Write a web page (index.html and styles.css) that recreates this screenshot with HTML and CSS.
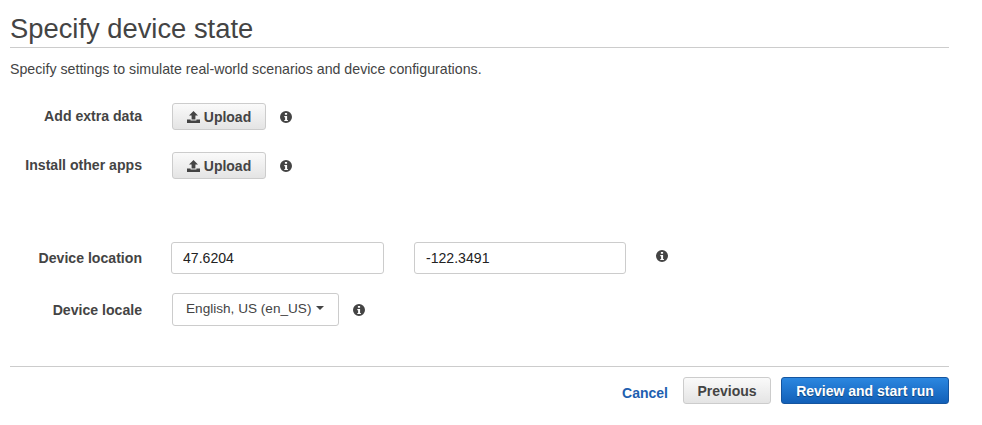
FILE: index.html
```html
<!DOCTYPE html>
<html lang="en">
<head>
  <meta charset="UTF-8">
  <title>Specify device state</title>
  <link rel="stylesheet" href="styles.css">
</head>
<body>
  <h1>Specify device state</h1>
  <p class="intro">Specify settings to simulate real-world scenarios and device configurations.</p>

  <div class="row row-upload">
    <label>Add extra data</label>
    <button class="btn upload">
      <svg class="upload-icon" viewBox="0 0 13 12" width="13" height="12"><path d="M6.5 0 L11 4.6 H8.4 V8.4 H4.6 V4.6 H2 Z M0 8.6 H3.6 V9.6 H9.4 V8.6 H13 V12 H0 Z"/></svg>
      Upload
    </button>
    <svg class="info" viewBox="0 0 12 12" width="12" height="12"><path fill-rule="evenodd" d="M6 0a6 6 0 1 0 0 12A6 6 0 0 0 6 0z M4.9 1.9h2.2v1.9H4.9z M4.3 5h2.8v3.9h.8v1.2H4.3V8.9h.8V6.2h-.8z"/></svg>
  </div>

  <div class="row row-upload">
    <label>Install other apps</label>
    <button class="btn upload">
      <svg class="upload-icon" viewBox="0 0 13 12" width="13" height="12"><path d="M6.5 0 L11 4.6 H8.4 V8.4 H4.6 V4.6 H2 Z M0 8.6 H3.6 V9.6 H9.4 V8.6 H13 V12 H0 Z"/></svg>
      Upload
    </button>
    <svg class="info" viewBox="0 0 12 12" width="12" height="12"><path fill-rule="evenodd" d="M6 0a6 6 0 1 0 0 12A6 6 0 0 0 6 0z M4.9 1.9h2.2v1.9H4.9z M4.3 5h2.8v3.9h.8v1.2H4.3V8.9h.8V6.2h-.8z"/></svg>
  </div>

  <div class="row row-location">
    <label>Device location</label>
    <input class="field" value="47.6204">
    <input class="field field-second" value="-122.3491">
    <svg class="info info-location" viewBox="0 0 12 12" width="12" height="12"><path fill-rule="evenodd" d="M6 0a6 6 0 1 0 0 12A6 6 0 0 0 6 0z M4.9 1.9h2.2v1.9H4.9z M4.3 5h2.8v3.9h.8v1.2H4.3V8.9h.8V6.2h-.8z"/></svg>
  </div>

  <div class="row row-locale">
    <label>Device locale</label>
    <div class="select">English, US (en_US)<span class="caret"></span></div>
    <svg class="info" viewBox="0 0 12 12" width="12" height="12"><path fill-rule="evenodd" d="M6 0a6 6 0 1 0 0 12A6 6 0 0 0 6 0z M4.9 1.9h2.2v1.9H4.9z M4.3 5h2.8v3.9h.8v1.2H4.3V8.9h.8V6.2h-.8z"/></svg>
  </div>

  <div class="footer">
    <a class="cancel" href="#">Cancel</a>
    <button class="btn previous">Previous</button>
    <button class="btn primary">Review and start run</button>
  </div>
</body>
</html>
```

FILE: styles.css
```css
body {
  margin: 0;
  padding: 0 33px 0 10px;
  background: #fff;
  color: #444;
  font-family: "Liberation Sans", Arial, sans-serif;
  font-size: 14px;
}

h1 {
  margin: 0;
  padding: 13px 0 3px;
  height: 31px;
  line-height: 31px;
  font-size: 27.35px;
  font-weight: 400;
  color: #444;
  border-bottom: 1px solid #ccc;
}

.intro {
  margin: 13px 0 0;
  height: 16px;
  line-height: 16px;
  font-size: 14.2px;
  color: #444;
}

.row {
  display: flex;
  align-items: center;
}

.row label {
  width: 132px;
  text-align: right;
  font-size: 14.1px;
  font-weight: 700;
  color: #444;
}

.row-upload {
  height: 27px;
  margin-top: 22px;
}

.intro + .row-upload {
  margin-top: 26px;
}

.row-upload label {
  position: relative;
  top: -1px;
}

.btn {
  height: 27px;
  padding: 0;
  border: 1px solid #ccc;
  border-radius: 3px;
  font-family: inherit;
  font-size: 14px;
  font-weight: 700;
  color: #444;
  background: linear-gradient(#fafafa, #e4e4e4);
}

.upload {
  width: 94px;
  margin-left: 30px;
  display: flex;
  align-items: center;
  justify-content: center;
  gap: 4px;
}

.upload-icon {
  fill: #444;
}

.info {
  flex: none;
  fill: #444;
  margin-left: 14px;
}

.row-location {
  height: 32px;
  margin-top: 63px;
}

.field {
  box-sizing: border-box;
  width: 213px;
  height: 32px;
  margin-left: 29px;
  padding: 0 11px;
  border: 1px solid #ccc;
  border-radius: 3px;
  font-family: inherit;
  font-size: 14.1px;
  color: #222;
}

.field-second {
  width: 212px;
  margin-left: 30px;
}

.info-location {
  margin-left: 30px;
  margin-top: -4px;
}

.row-locale {
  height: 33px;
  margin-top: 19px;
}

.select {
  box-sizing: border-box;
  width: 167px;
  height: 33px;
  line-height: 30px;
  margin-left: 30px;
  padding-left: 13px;
  border: 1px solid #ccc;
  border-radius: 3px;
  font-size: 13.6px;
  color: #444;
  white-space: nowrap;
}

.caret {
  display: inline-block;
  margin-left: 5px;
  vertical-align: 3px;
  border-top: 4.5px solid #444;
  border-left: 4.5px solid transparent;
  border-right: 4.5px solid transparent;
}

.footer {
  margin-top: 40px;
  padding-top: 10px;
  border-top: 1px solid #ccc;
  display: flex;
  justify-content: flex-end;
  align-items: center;
}

.cancel {
  margin-right: 15px;
  padding-top: 4px;
  color: #1e5fb0;
  font-weight: 700;
  text-decoration: none;
}

.previous {
  width: 88px;
  margin-right: 10px;
}

.primary {
  width: 168px;
  color: #fff;
  border-color: #15559f;
  background: linear-gradient(#2b87e0, #1260b8);
  text-shadow: 0 1px 1px rgba(0, 0, 0, 0.4);
}
```
